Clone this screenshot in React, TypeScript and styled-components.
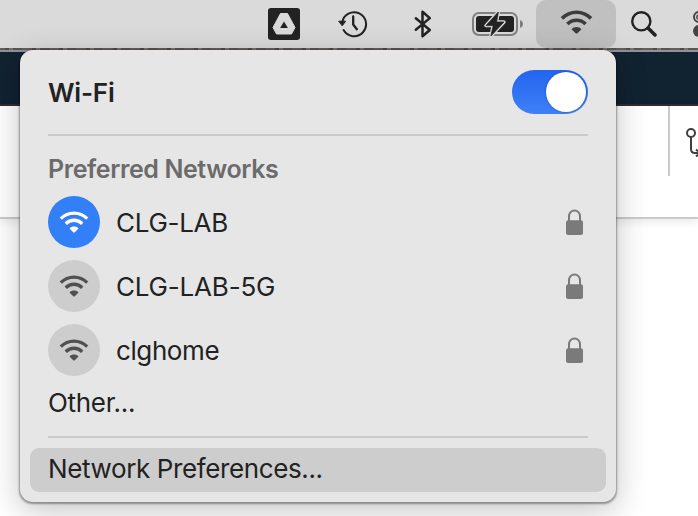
import React from "react";
import styled, { createGlobalStyle, css } from "styled-components";

const GlobalStyle = createGlobalStyle`
  *, *::before, *::after { box-sizing: border-box; }
  body { margin: 0; overflow: hidden; background: #fff; }
`;

const Desktop = styled.div`
  position: relative;
  width: 698px;
  height: 516px;
  overflow: hidden;
  background: #fff;
  font-family: Inter, "Liberation Sans", sans-serif;
  font-size: 26px;
  color: #222;
`;

const MenuBar = styled.header`
  display: flex;
  align-items: center;
  height: 48px;
  padding-left: 268px;
  background: #dadada;
  overflow: hidden;
  svg { display: block; flex: none; }
`;

const MenuItem = styled.div<{ $gap?: number; $active?: boolean }>`
  display: flex;
  flex: none;
  align-items: center;
  justify-content: center;
  height: 48px;
  margin-left: ${(p) => p.$gap ?? 0}px;
  ${(p) =>
    p.$active &&
    css`
      width: 80px;
      padding-bottom: 3px;
      border-radius: 10px;
      color: #3c3c3c;
      background: #c0c0c0;
    `}
`;

const WallpaperEdge = styled.div`
  height: 2px;
  background: repeating-linear-gradient(
    90deg,
    #6b5c5a 0 5px,
    #4f4a4e 5px 9px,
    #80706a 9px 13px,
    #5c5454 13px 22px,
    #6b5b5d 22px 27px
  );
`;

const BrowserBar = styled.div`
  height: 56px;
  border-top: 2px solid #8c949b;
  border-bottom: 2px solid #2f2f2f;
  background: #112231;
`;

const PageToolbar = styled.div`
  display: flex;
  justify-content: flex-end;
  height: 113px;
  border-bottom: 2px solid #cbcbcb;
  box-shadow: 0 2px 10px rgba(0, 0, 0, 0.1);
`;

const ToolbarSection = styled.div`
  width: 30px;
  height: 70px;
  padding: 20px 0 0 15px;
  border-left: 2px solid #c9c9c9;
  overflow: hidden;
  svg { display: block; }
`;

const Panel = styled.section`
  position: absolute;
  top: 50px;
  left: 20px;
  display: flex;
  flex-direction: column;
  width: 596px;
  height: 452px;
  padding: 20px 10px 10px;
  border-radius: 13px;
  background: #e6e6e6;
  box-shadow: 0 1px 2px 0.5px rgba(0, 0, 0, 0.36), 0 8px 32px rgba(0, 0, 0, 0.24);
`;

const TitleRow = styled.div`
  display: flex;
  align-items: center;
  justify-content: space-between;
  height: 44px;
  margin: 0 18px;
`;

const Title = styled.h1`
  margin: 2px 0 0;
  font-size: 26px;
  font-weight: 600;
  line-height: 44px;
  letter-spacing: -0.2px;
`;

const Toggle = styled.button`
  display: flex;
  justify-content: flex-end;
  width: 76px;
  height: 44px;
  padding: 2px;
  border: 0;
  border-radius: 22px;
  background: linear-gradient(#2365f0, #3f80f8);
`;

const Knob = styled.span`
  width: 40px;
  height: 40px;
  border-radius: 50%;
  background: #fff;
  box-shadow: 0 0 2px rgba(0, 20, 80, 0.5);
`;

const Divider = styled.hr<{ $top: number }>`
  width: 540px;
  height: 2px;
  margin: ${(p) => p.$top}px 18px 0;
  border: 0;
  background: #cacaca;
`;

const SectionLabel = styled.h2`
  height: 32px;
  margin: 17px 18px 11px;
  color: #6b6b6b;
  font-size: 25px;
  font-weight: 600;
  line-height: 32px;
  letter-spacing: -0.4px;
`;

const NetworkList = styled.ul`
  display: flex;
  flex-direction: column;
  gap: 12px;
  margin: 0 18px;
  padding: 0;
  list-style: none;
`;

const Network = styled.li`
  display: flex;
  align-items: center;
  height: 52px;
  padding-right: 4px;
`;

const Signal = styled.span<{ $on?: boolean }>`
  display: flex;
  align-items: center;
  justify-content: center;
  width: 52px;
  height: 52px;
  margin-right: 16px;
  border-radius: 50%;
  color: ${(p) => (p.$on ? "#fff" : "#505050")};
  background: ${(p) => (p.$on ? "#327ff8" : "#cdcdcd")};
`;

const NetworkName = styled.span<{ $track: number }>`
  flex: 1;
  letter-spacing: ${(p) => p.$track}px;
`;

const Other = styled.div`
  height: 36px;
  margin: 9px 18px 0;
  line-height: 36px;
  letter-spacing: -0.3px;
`;

const Preferences = styled.div`
  height: 44px;
  margin-top: 10px;
  padding-left: 18px;
  border-radius: 9px;
  background: #cdcdcd;
  line-height: 42px;
  letter-spacing: -0.38px;
`;

const WifiIcon = ({ width }: { width: number }) => (
  <svg width={width} height={(width * 24) / 32} viewBox="0 0 32 24" fill="none" stroke="currentColor">
    <path d="M1.9 8.1C9.9.2 22.1.2 30.1 8.1" strokeWidth="3.5" />
    <path d="M7.2 13.6C12.1 8.7 19.9 8.7 24.8 13.6" strokeWidth="3.6" />
    <path d="M11.2 18.6C13.7 15.9 18.3 15.9 20.8 18.6L16.9 22.6Q16 23.4 15.1 22.6Z" fill="currentColor" stroke="none" />
  </svg>
);

const LockIcon = () => (
  <svg width="18" height="26" viewBox="0 0 18 26">
    <path d="M3 13V7.2a5.5 5.7 0 0 1 11 0V13" fill="none" stroke="#7a7a7a" strokeWidth="2" />
    <rect x="0" y="11.3" width="17" height="14.7" rx="2" fill="#7a7a7a" />
  </svg>
);

const DriveIcon = () => (
  <svg width="32" height="32" viewBox="0 0 32 32">
    <rect width="32" height="32" rx="3" fill="#222" />
    <path d="M12.5 5.5h7L27 19.5l-3.5 6.5h-15L5 19.5Z" fill="#dadada" stroke="#dadada" strokeWidth="1" strokeLinejoin="round" />
    <path d="M16 13.4 19.9 20h-7.8Z" fill="#222" />
  </svg>
);

const HistoryIcon = () => (
  <svg width="30" height="28" viewBox="0 0 30 28" fill="none" stroke="#222" strokeWidth="2">
    <path d="M4.2 12.5A12 12 0 1 1 5.6 20.1" strokeLinecap="round" />
    <path d="M.7 11.2h7L4.2 15.8Z" fill="#222" strokeWidth="1" strokeLinejoin="round" />
    <path d="M15.2 6.5v8l3.7 4.7" strokeWidth="2.3" strokeLinecap="round" strokeLinejoin="round" />
  </svg>
);

const BluetoothIcon = () => (
  <svg width="18" height="28" viewBox="0 0 18 28" fill="none" stroke="#222" strokeWidth="2.5" strokeLinejoin="round" strokeLinecap="round">
    <path d="m1.8 8.2 14 11.8-7.3 6.2V1.8l7.3 6.3L1.8 19.8" />
  </svg>
);

const BatteryIcon = () => (
  <svg width="52" height="26" viewBox="0 0 52 26">
    <rect x="1" y="2" width="44" height="22" rx="6" fill="none" stroke="#808080" strokeWidth="2" />
    <path d="M48 9q3 1.2 3 4t-3 4Z" fill="#808080" />
    <rect x="4" y="5" width="38" height="16" rx="3" fill="#222" />
    <path d="M26.3 1 14 14.6h7.2L18.9 25l13-14h-7.3Z" fill="#222" stroke="#dadada" strokeWidth="3.4" strokeLinejoin="round" />
    <path d="M26.3 1 14 14.6h7.2L18.9 25l13-14h-7.3Z" fill="#222" stroke="#222" strokeWidth=".8" strokeLinejoin="round" />
  </svg>
);

const SearchIcon = () => (
  <svg width="26" height="26" viewBox="0 0 26 26" fill="none" stroke="#222">
    <circle cx="10.3" cy="10.3" r="9.1" strokeWidth="2.4" />
    <path d="m17 17 7 7" strokeWidth="3.5" strokeLinecap="round" />
  </svg>
);

const ControlIcon = () => (
  <svg width="28" height="26" viewBox="0 0 28 26">
    <rect x="1" y="1" width="26" height="10" rx="5" fill="none" stroke="#444" strokeWidth="2" />
    <circle cx="6" cy="6" r="2.2" fill="none" stroke="#444" strokeWidth="1.5" />
    <rect y="14" width="28" height="12" rx="6" fill="#444" />
  </svg>
);

const BranchIcon = () => (
  <svg width="28" height="36" viewBox="0 0 28 36" fill="none" stroke="#3f3f3f" strokeWidth="2">
    <circle cx="6" cy="7" r="4" />
    <path d="M6 11v12q0 4 4 4h8M11 23.5l4 3.5-4 3.5" />
  </svg>
);

const networks = [
  { name: "CLG-LAB", on: true, track: -0.28 },
  { name: "CLG-LAB-5G", on: false, track: -0.18 },
  { name: "clghome", on: false, track: -0.4 },
];

export default function App() {
  return (
    <Desktop>
      <GlobalStyle />
      <MenuBar>
        <MenuItem><DriveIcon /></MenuItem>
        <MenuItem $gap={38}><HistoryIcon /></MenuItem>
        <MenuItem $gap={46}><BluetoothIcon /></MenuItem>
        <MenuItem $gap={40}><BatteryIcon /></MenuItem>
        <MenuItem $gap={12} $active><WifiIcon width={33} /></MenuItem>
        <MenuItem $gap={15}><SearchIcon /></MenuItem>
        <MenuItem $gap={36}><ControlIcon /></MenuItem>
      </MenuBar>
      <WallpaperEdge />
      <BrowserBar />
      <PageToolbar>
        <ToolbarSection><BranchIcon /></ToolbarSection>
      </PageToolbar>
      <Panel>
        <TitleRow>
          <Title>Wi-Fi</Title>
          <Toggle aria-label="Wi-Fi"><Knob /></Toggle>
        </TitleRow>
        <Divider $top={20} />
        <SectionLabel>Preferred Networks</SectionLabel>
        <NetworkList>
          {networks.map((n) => (
            <Network key={n.name}>
              <Signal $on={n.on}><WifiIcon width={30} /></Signal>
              <NetworkName $track={n.track}>{n.name}</NetworkName>
              <LockIcon />
            </Network>
          ))}
        </NetworkList>
        <Other>Other...</Other>
        <Divider $top={15} />
        <Preferences>Network Preferences...</Preferences>
      </Panel>
    </Desktop>
  );
}
